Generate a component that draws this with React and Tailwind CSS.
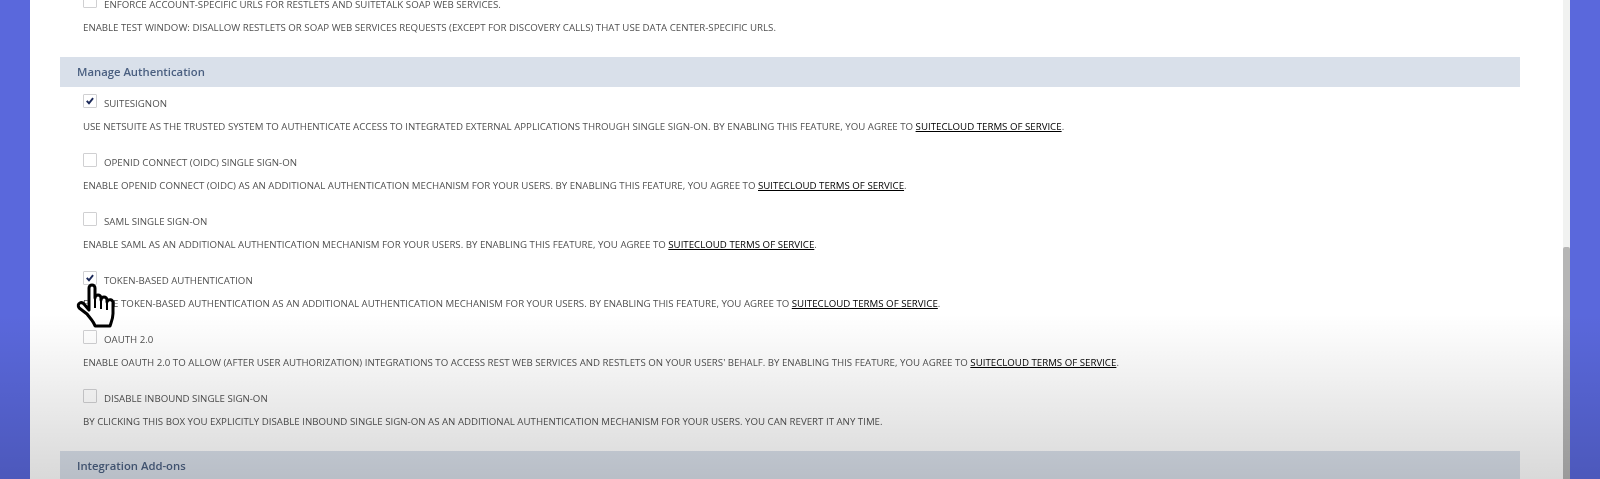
const ROWS = [
  { label: 'SUITESIGNON', checked: true, desc: 'USE NETSUITE AS THE TRUSTED SYSTEM TO AUTHENTICATE ACCESS TO INTEGRATED EXTERNAL APPLICATIONS THROUGH SINGLE SIGN-ON. BY ENABLING THIS FEATURE, YOU AGREE TO ', link: true },
  { label: 'OPENID CONNECT (OIDC) SINGLE SIGN-ON', desc: 'ENABLE OPENID CONNECT (OIDC) AS AN ADDITIONAL AUTHENTICATION MECHANISM FOR YOUR USERS. BY ENABLING THIS FEATURE, YOU AGREE TO ', link: true },
  { label: 'SAML SINGLE SIGN-ON', desc: 'ENABLE SAML AS AN ADDITIONAL AUTHENTICATION MECHANISM FOR YOUR USERS. BY ENABLING THIS FEATURE, YOU AGREE TO ', link: true },
  { label: 'TOKEN-BASED AUTHENTICATION', checked: true, desc: 'ENABLE TOKEN-BASED AUTHENTICATION AS AN ADDITIONAL AUTHENTICATION MECHANISM FOR YOUR USERS. BY ENABLING THIS FEATURE, YOU AGREE TO ', link: true },
  { label: 'OAUTH 2.0', desc: "ENABLE OAUTH 2.0 TO ALLOW (AFTER USER AUTHORIZATION) INTEGRATIONS TO ACCESS REST WEB SERVICES AND RESTLETS ON YOUR USERS' BEHALF. BY ENABLING THIS FEATURE, YOU AGREE TO ", link: true },
  { label: 'DISABLE INBOUND SINGLE SIGN-ON', desc: 'BY CLICKING THIS BOX YOU EXPLICITLY DISABLE INBOUND SINGLE SIGN-ON AS AN ADDITIONAL AUTHENTICATION MECHANISM FOR YOUR USERS. YOU CAN REVERT IT ANY TIME.' },
]

function Checkbox({ checked, className = '' }) {
  return (
    <span className={`w-[14px] h-[14px] shrink-0 border border-[#d0d0d2] rounded-[1px] bg-white flex items-center justify-center ${className}`}>
      {checked && (
        <svg viewBox="0 0 14 14" className="w-[14px] h-[14px]">
          <path d="M3.2 6.8 L5.8 9.6 L10.6 3.6" fill="none" stroke="#1c2a5a" strokeWidth="2.2" />
        </svg>
      )}
    </span>
  )
}

function FeatureRow({ label, desc, checked, link }) {
  return (
    <div className="h-[59px]">
      <div className="flex items-start h-[26px]">
        <Checkbox checked={checked} />
        <span className="ml-[7px] mt-[3px] text-[9.7px] leading-[14px] text-[#505050]">{label}</span>
      </div>
      <p className="text-[9.7px] leading-[14px] text-[#505050] whitespace-nowrap">
        {desc}
        {link && <span className="text-black underline">SUITECLOUD TERMS OF SERVICE</span>}
        {link && '.'}
      </p>
    </div>
  )
}

function Band({ title, className }) {
  return (
    <div className={`h-[30px] pl-[17px] flex items-center text-[11.3px] font-semibold ${className}`}>{title}</div>
  )
}

function HandCursor() {
  return (
    <svg viewBox="0 0 40 46" className="absolute left-[76px] top-[283px] w-[40px] h-[46px]">
      <path
        d="M13 5a3 3 0 0 1 6 0v10a3 3 0 0 1 6 0v2a3 3 0 0 1 6 0v2a3 3 0 0 1 6 1.5l0 10c0 5-1.5 8-3 12.5H19c-1-4-5-8-8-12L3.2 25c-1.6-2-1-4.2.6-5 1.8-.9 3.4 0 4.6 1.4L13 27z"
        fill="#fff"
        stroke="#000"
        strokeWidth="3"
        strokeLinejoin="round"
      />
      <path d="M19 15v10M25 17v9M31 19v8" stroke="#000" strokeWidth="2" fill="none" />
    </svg>
  )
}

export default function App() {
  return (
    <div className="relative h-[479px] w-full overflow-hidden flex bg-[#5a68dc] font-['Open_Sans',sans-serif]">
      <div className="w-[30px] shrink-0 bg-[#5a68dc]" />
      <div className="flex-1 bg-white overflow-hidden blur-[0.4px]">
        <div className="pl-[53px] h-[57px] pb-[9px]">
          <div className="flex items-start h-[21px]">
            <Checkbox className="-mt-[6px]" />
            <span className="ml-[7px] text-[9.7px] leading-[10px] text-[#505050]">ENFORCE ACCOUNT-SPECIFIC URLS FOR RESTLETS AND SUITETALK SOAP WEB SERVICES.</span>
          </div>
          <p className="text-[9.7px] leading-[14px] text-[#505050]">ENABLE TEST WINDOW: DISALLOW RESTLETS OR SOAP WEB SERVICES REQUESTS (EXCEPT FOR DISCOVERY CALLS) THAT USE DATA CENTER-SPECIFIC URLS.</p>
        </div>
        <div className="ml-[30px] w-[1460px]">
          <Band title="Manage Authentication" className="bg-[#d9e0ea] text-[#4a5f80]" />
        </div>
        <div className="pl-[53px] pt-[7px] h-[364px]">
          {ROWS.map(r => <FeatureRow key={r.label} {...r} />)}
        </div>
        <div className="ml-[30px] w-[1460px]">
          <Band title="Integration Add-ons" className="bg-[#d9e0ea] text-[#4a5f80]" />
        </div>
      </div>
      <div className="w-[7px] shrink-0 bg-[#f1f2f1] flex flex-col">
        <div className="h-[247px]" />
        <div className="flex-1 bg-[#b5b5b5] rounded-t-[2px]" />
      </div>
      <div className="w-[30px] shrink-0 bg-[#5a68dc]" />
      <HandCursor />
      <div className="absolute inset-x-0 bottom-0 h-[165px] bg-gradient-to-b from-transparent to-black/15 pointer-events-none" />
    </div>
  )
}
